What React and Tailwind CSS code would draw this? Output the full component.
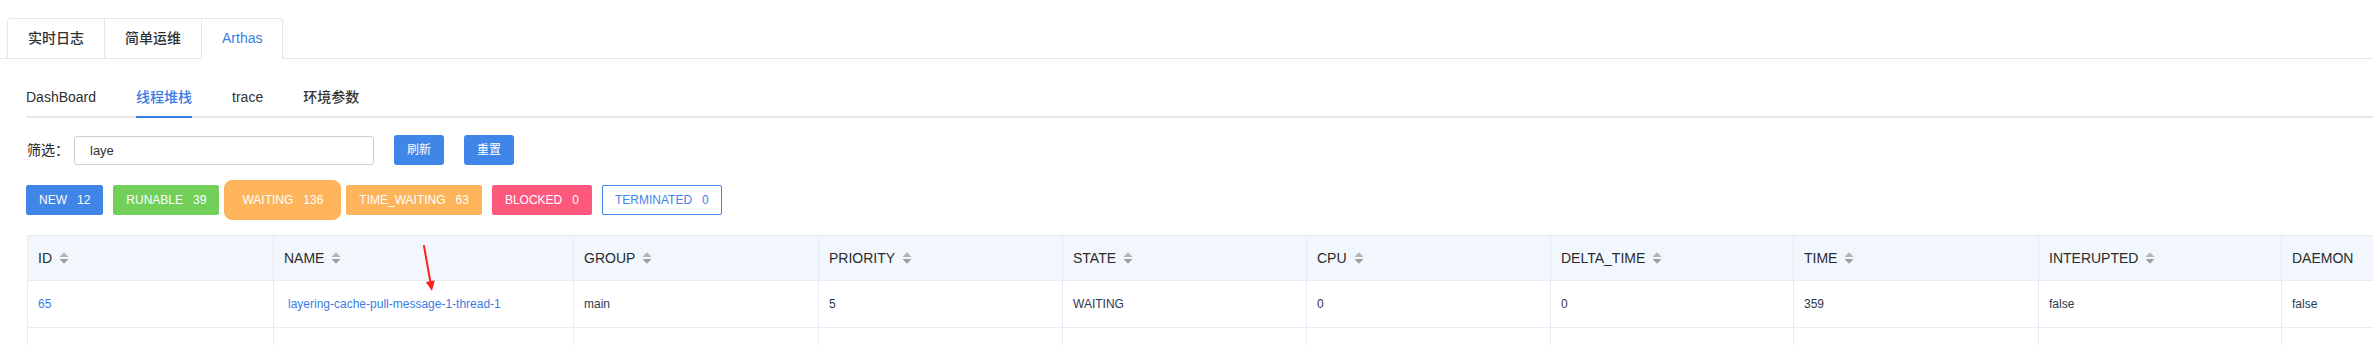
import { useState } from "react"

const font = { fontFamily: '"Liberation Sans", "Noto Sans CJK SC", Arial, sans-serif' }

const topTabs = ["实时日志", "简单运维", "Arthas"]
const subTabs = ["DashBoard", "线程堆栈", "trace", "环境参数"]

const states = [
  { name: "NEW", count: 12, cls: "bg-[#4085e8] text-white border-[#4085e8]" },
  { name: "RUNABLE", count: 39, cls: "bg-[#72cf58] text-white border-[#72cf58]" },
  { name: "WAITING", count: 136, cls: "bg-[#feb45a] text-white border-[#feb45a]" },
  { name: "TIME_WAITING", count: 63, cls: "bg-[#feb45a] text-white border-[#feb45a]" },
  { name: "BLOCKED", count: 0, cls: "bg-[#fe587d] text-white border-[#fe587d]" },
  { name: "TERMINATED", count: 0, cls: "bg-white text-[#4085e8] border-[#4085e8]" },
]

const columns = [
  { title: "ID", w: "w-[246px]", sort: true },
  { title: "NAME", w: "w-[300px]", sort: true },
  { title: "GROUP", w: "w-[245px]", sort: true },
  { title: "PRIORITY", w: "w-[244px]", sort: true },
  { title: "STATE", w: "w-[244px]", sort: true },
  { title: "CPU", w: "w-[244px]", sort: true },
  { title: "DELTA_TIME", w: "w-[243px]", sort: true },
  { title: "TIME", w: "w-[245px]", sort: true },
  { title: "INTERUPTED", w: "w-[243px]", sort: true },
  { title: "DAEMON", w: "w-[244px]", sort: false },
]

const row = ["65", "layering-cache-pull-message-1-thread-1", "main", "5", "WAITING", "0", "0", "359", "false", "false"]

function SortIcon() {
  return (
    <svg width="10" height="14" viewBox="0 0 10 14" className="ml-[7px] shrink-0">
      <path d="M0.5 6 L5 1.2 L9.5 6 Z" fill="#b4b4b4" />
      <path d="M0.5 8 L9.5 8 L5 12.8 Z" fill="#a0a0a0" />
    </svg>
  )
}

export default function App() {
  const [tab] = useState("Arthas")
  const [sub] = useState("线程堆栈")
  const [active] = useState("WAITING")
  const [filter, setFilter] = useState("laye")

  return (
    <div className="relative min-h-[345px] w-full overflow-hidden bg-white" style={font}>
      {/* top card tabs */}
      <div className="border-b border-[#e4e7ed] pt-[18px] pl-[7px]">
        <div className="flex w-max rounded-t-[4px] border border-b-0 border-[#e4e7ed]">
          {topTabs.map((t, i) => (
            <div
              key={t}
              className={
                "-mb-px flex h-[40px] items-center border-b px-5 text-[14px] font-medium " +
                (i > 0 ? "border-l border-l-[#e4e7ed] " : "") +
                (t === tab ? "border-b-white text-[#3a7de6]" : "border-b-[#e4e7ed] text-[#303133]")
              }
            >
              {t}
            </div>
          ))}
        </div>
      </div>

      {/* sub tabs */}
      <div className="ml-[26px] mt-[19px] flex gap-10 border-b-2 border-[#e4e7ed]">
        {subTabs.map((t) => (
          <div
            key={t}
            className={
              "-mb-[2px] flex h-[40px] items-center border-b-2 text-[14px] font-medium " +
              (t === sub ? "border-[#3a7de6] text-[#3a7de6]" : "border-transparent text-[#303133]")
            }
          >
            {t}
          </div>
        ))}
      </div>

      {/* filter */}
      <div className="ml-[27px] mt-[17px] flex items-center">
        <span className="text-[14px] text-[#222]">筛选：</span>
        <input
          value={filter}
          onChange={(e) => setFilter(e.target.value)}
          className="ml-[5px] h-[29px] w-[300px] rounded-[3px] border border-[#cfcfcf] pl-[15px] text-[13px] text-[#333] outline-none"
        />
        <button className="ml-[20px] h-[30px] w-[50px] rounded-[3px] bg-[#4085e8] text-[12px] text-white">刷新</button>
        <button className="ml-[20px] h-[30px] w-[50px] rounded-[3px] bg-[#4085e8] text-[12px] text-white">重置</button>
      </div>

      {/* state badges */}
      <div className="ml-[26px] mt-[15px] flex h-[40px] items-center gap-[10px]">
        {states.map((s) => (
          <div
            key={s.name}
            className={
              "flex items-center gap-[10px] border text-[12px] " +
              s.cls +
              (s.name === active ? " -mx-[5px] h-[40px] rounded-[8px] px-[17px]" : " h-[30px] rounded-[2px] px-[12px]")
            }
          >
            <span>{s.name}</span>
            <span>{s.count}</span>
          </div>
        ))}
      </div>

      {/* table */}
      <div className="ml-[27px] mt-[15px] w-max border-l border-t border-[#e6ebf5]">
        <div className="flex h-[45px] border-b border-[#e6ebf5] bg-[#f2f7fd]">
          {columns.map((c) => (
            <div key={c.title} className={"flex shrink-0 items-center border-r border-[#e6ebf5] pl-[10px] text-[14px] font-medium text-[#2b2b2b] " + c.w}>
              {c.title}
              {c.sort && <SortIcon />}
            </div>
          ))}
        </div>
        <div className="flex h-[47px] border-b border-[#e6ebf5]">
          {columns.map((c, i) => (
            <div
              key={c.title}
              className={
                "flex shrink-0 items-center border-r border-[#e6ebf5] text-[12px] " +
                c.w +
                (i === 1 ? " pl-[14px]" : " pl-[10px]") +
                (i < 2 ? " text-[#3a7de6]" : " text-[#303650]")
              }
            >
              {row[i]}
            </div>
          ))}
        </div>
        <div className="flex h-[47px]">
          {columns.map((c) => (
            <div key={c.title} className={"shrink-0 border-r border-[#e6ebf5] " + c.w} />
          ))}
        </div>
      </div>

      {/* red annotation arrow */}
      <svg className="absolute left-[415px] top-[243px]" width="25" height="52" viewBox="0 0 25 52">
        <line x1="9" y1="3" x2="15.4" y2="39" stroke="#ff2020" strokeWidth="2" strokeLinecap="round" />
        <polygon points="17,48 19.7,37.4 10.8,38.9" fill="#ff2020" />
      </svg>
    </div>
  )
}
